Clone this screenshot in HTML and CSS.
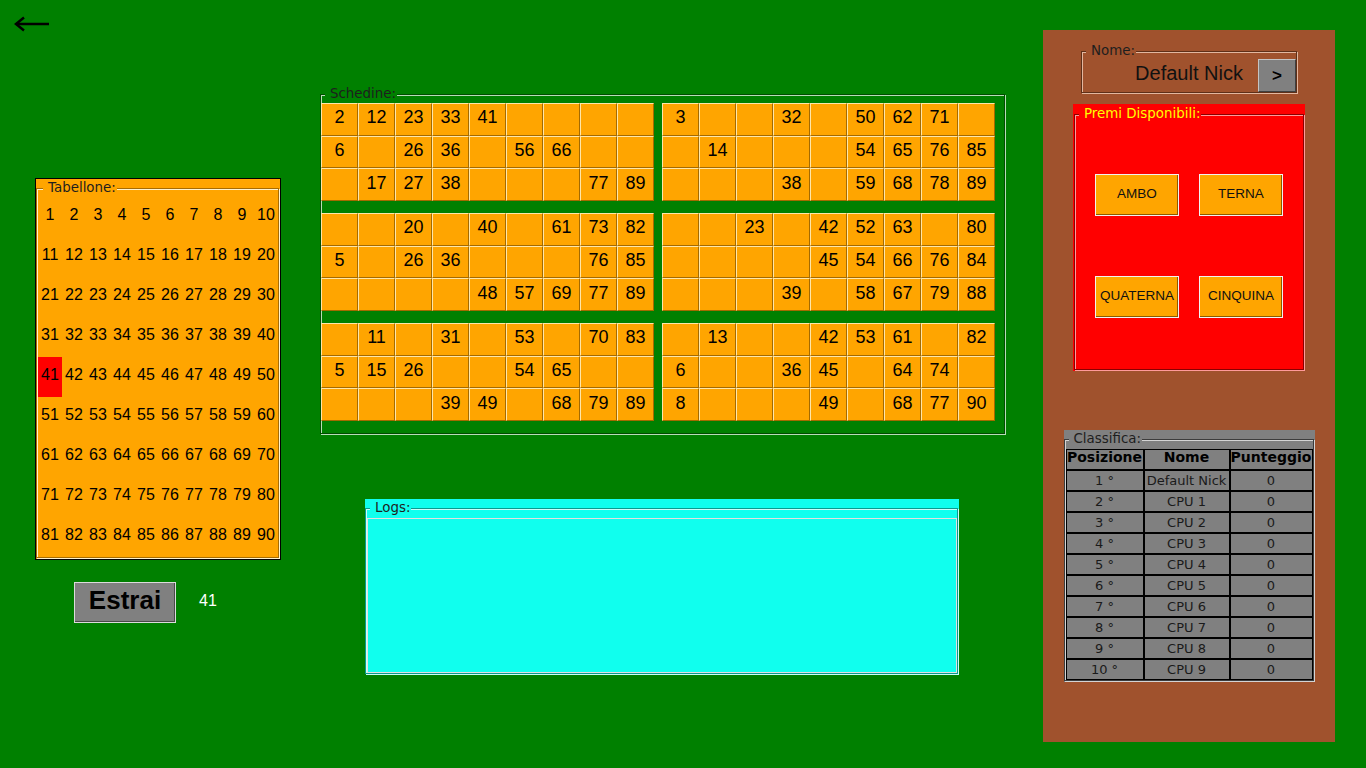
FILE: index.html
```html
<html>
  <head>
    <title>Tombola</title>
    <link rel="stylesheet" href="styles.css">
  </head>
  <body>
    <div class="page">
      <div class="col-left">
        <button class="back" title="Indietro">
          <svg width="36" height="18" viewBox="0 0 36 18">
            <path d="M2.5 10 H35" stroke="#000" stroke-width="2.5" fill="none"/>
            <path d="M10 3.5 L2 10 L10 16.5" stroke="#000" stroke-width="2.5" fill="none" stroke-linejoin="miter"/>
          </svg>
        </button>
        <div class="tabellone">
          <fieldset class="titled">
            <legend>Tabellone:</legend>
            <div class="board" id="board"></div>
          </fieldset>
        </div>
        <div class="draw-row">
          <button class="btn-estrai">Estrai</button>
          <span class="last-drawn">41</span>
        </div>
      </div>

      <div class="col-mid">
        <fieldset class="titled schedine">
          <legend>Schedine:</legend>
          <div class="cards" id="cards"></div>
        </fieldset>
        <div class="logs">
          <fieldset class="titled">
            <legend>Logs:</legend>
            <textarea class="log-area" readonly></textarea>
          </fieldset>
        </div>
      </div>

      <div class="sidebar">
        <fieldset class="titled nome">
          <legend>Nome:</legend>
          <div class="nome-row">
            <span></span>
            <span class="nick">Default Nick</span>
            <button class="btn-go">&gt;</button>
          </div>
        </fieldset>

        <div class="premi">
          <fieldset class="titled">
            <legend>Premi Disponibili:</legend>
            <div class="prizes">
              <button class="btn-prize">AMBO</button>
              <button class="btn-prize">TERNA</button>
              <button class="btn-prize">QUATERNA</button>
              <button class="btn-prize">CINQUINA</button>
            </div>
          </fieldset>
        </div>

        <div class="classifica">
          <fieldset class="titled">
            <legend>Classifica:</legend>
            <table class="ranking">
              <thead>
                <tr><th>Posizione</th><th>Nome</th><th>Punteggio</th></tr>
              </thead>
              <tbody>
                <tr><td>1 °</td><td>Default Nick</td><td>0</td></tr>
                <tr><td>2 °</td><td>CPU 1</td><td>0</td></tr>
                <tr><td>3 °</td><td>CPU 2</td><td>0</td></tr>
                <tr><td>4 °</td><td>CPU 3</td><td>0</td></tr>
                <tr><td>5 °</td><td>CPU 4</td><td>0</td></tr>
                <tr><td>6 °</td><td>CPU 5</td><td>0</td></tr>
                <tr><td>7 °</td><td>CPU 6</td><td>0</td></tr>
                <tr><td>8 °</td><td>CPU 7</td><td>0</td></tr>
                <tr><td>9 °</td><td>CPU 8</td><td>0</td></tr>
                <tr><td>10 °</td><td>CPU 9</td><td>0</td></tr>
              </tbody>
            </table>
          </fieldset>
        </div>
      </div>
    </div>

    <script>
      document.addEventListener("DOMContentLoaded", function () {
        const drawn = [41];

        // tabellone 1..90
        const board = document.getElementById("board");
        for (let n = 1; n <= 90; n++) {
          const cell = document.createElement("span");
          cell.textContent = n;
          if (drawn.includes(n)) cell.className = "drawn";
          board.appendChild(cell);
        }

        // schedine, 0 = casella vuota
        const cards = [
          [[2,12,23,33,41,0,0,0,0],[6,0,26,36,0,56,66,0,0],[0,17,27,38,0,0,0,77,89]],
          [[3,0,0,32,0,50,62,71,0],[0,14,0,0,0,54,65,76,85],[0,0,0,38,0,59,68,78,89]],
          [[0,0,20,0,40,0,61,73,82],[5,0,26,36,0,0,0,76,85],[0,0,0,0,48,57,69,77,89]],
          [[0,0,23,0,42,52,63,0,80],[0,0,0,0,45,54,66,76,84],[0,0,0,39,0,58,67,79,88]],
          [[0,11,0,31,0,53,0,70,83],[5,15,26,0,0,54,65,0,0],[0,0,0,39,49,0,68,79,89]],
          [[0,13,0,0,42,53,61,0,82],[6,0,0,36,45,0,64,74,0],[8,0,0,0,49,0,68,77,90]]
        ];
        const cardsEl = document.getElementById("cards");
        cards.forEach(function (rows) {
          const card = document.createElement("div");
          card.className = "card";
          rows.forEach(function (row) {
            row.forEach(function (n) {
              const cell = document.createElement("span");
              cell.textContent = n ? n : "";
              card.appendChild(cell);
            });
          });
          cardsEl.appendChild(card);
        });
      });
    </script>
  </body>
</html>
```

FILE: styles.css
```css
* {
  box-sizing: border-box;
}

body {
  margin: 0;
  background: #008000;
  font-family: "DejaVu Sans", sans-serif;
  overflow: hidden;
  --panel: #008000;
  --etch-dark: rgba(0, 0, 0, 0.35);
  --etch-light: rgba(255, 255, 255, 0.7);
}

button:hover {
  cursor: pointer;
}

.page {
  display: flex;
  align-items: flex-start;
  width: 1366px;
  height: 768px;
}

/* titled border, swing style */
.titled {
  margin: 0;
  padding: 0;
  min-width: 0;
  border: 1px solid var(--etch-dark);
  box-shadow: inset 1px 1px var(--etch-light), 1px 1px var(--etch-light);
}

.titled > legend {
  margin-left: 4px;
  padding: 0 1px 0 5px;
  font-size: 13.4px;
  line-height: 18px;
  color: #1e1e1e;
  background: var(--panel);
}

/* left column */
.col-left {
  width: 320px;
}

.back {
  display: block;
  margin: 14px 0 0 14px;
  width: 36px;
  height: 18px;
  padding: 0;
  border: 0;
  background: none;
}

.back svg {
  display: block;
}

.tabellone {
  --panel: #ffa500;
  --etch-dark: #a86c00;
  --etch-light: #fff2cc;
  width: 246px;
  margin: 146px 0 0 35px;
  padding-bottom: 1px;
  background: #ffa500;
  border: 1px solid #000;
}

.tabellone .titled {
  width: 243px;
  padding-left: 1px;
}

.tabellone legend {
  margin-left: 5px;
}

.board {
  display: grid;
  grid-template-columns: repeat(10, 24px);
  grid-auto-rows: 40px;
}

.board span {
  display: flex;
  align-items: center;
  justify-content: center;
  padding-bottom: 4px;
  font-family: "Liberation Sans", Arial, sans-serif;
  font-size: 16px;
  color: #000;
}

.board .drawn {
  background: #ff0000;
}

.draw-row {
  display: flex;
  align-items: center;
  margin: 22px 0 0 74px;
}

.btn-estrai {
  width: 102px;
  height: 41px;
  padding: 0 0 5px;
  background: #808080;
  border: 1px solid #dcdcdc;
  box-shadow: inset -1px -1px #4a4a4a;
  font-family: "Liberation Sans", Arial, sans-serif;
  font-size: 26px;
  font-weight: bold;
  color: #000;
}

.last-drawn {
  margin: 0 0 4px 23px;
  font-family: "Liberation Sans", Arial, sans-serif;
  font-size: 16px;
  color: #fff;
}

/* middle column */
.col-mid {
  width: 723px;
}

.schedine {
  --etch-dark: #004d00;
  --etch-light: #b8dcb8;
  width: 685px;
  margin-top: 85px;
  padding: 0 0 12px 0;
}

.cards {
  display: grid;
  grid-template-columns: 333px 333px;
  column-gap: 8px;
  row-gap: 12px;
}

.card {
  display: grid;
  grid-template-columns: repeat(9, 37px);
  grid-template-rows: repeat(3, 1fr);
  height: 98px;
  background: #ffa500;
}

.card span {
  display: flex;
  align-items: center;
  justify-content: center;
  padding-bottom: 3px;
  border-top: 1px solid #ffe6a8;
  border-left: 1px solid #ffe6a8;
  border-right: 1px solid #a46a00;
  border-bottom: 1px solid #a46a00;
  font-family: "Liberation Sans", Arial, sans-serif;
  font-size: 18px;
  color: #000;
}

.logs {
  --panel: #10ffee;
  --etch-dark: #0a9a90;
  --etch-light: #c8fffa;
  width: 594px;
  height: 175px;
  margin: 65px 0 0 45px;
  background: #10ffee;
}

.logs .titled {
  width: 593px;
}

.log-area {
  display: block;
  width: 590px;
  height: 155px;
  margin: 1px 0 0 1px;
  padding: 2px;
  resize: none;
  background: #10ffee;
  border: 1px solid #e4dede;
  outline: none;
}

/* sidebar */
.sidebar {
  --panel: #a0522d;
  --etch-dark: #5e2f18;
  --etch-light: #e3b79f;
  display: flex;
  flex-direction: column;
  align-items: center;
  width: 292px;
  height: 712px;
  margin-top: 30px;
  padding-top: 12px;
  background: #a0522d;
}

.nome {
  width: 216px;
}

.nome-row {
  display: grid;
  grid-template-columns: 38px 1fr 38px;
  align-items: center;
  height: 32px;
}

.nick {
  padding-bottom: 6px;
  text-align: center;
  font-family: "Liberation Sans", Arial, sans-serif;
  font-size: 20px;
  color: #111;
}

.btn-go {
  width: 38px;
  height: 33px;
  margin-top: -1px;
  padding: 0;
  background: #808080;
  border: 1px solid;
  border-color: #c4c4c4 #404040 #404040 #c4c4c4;
  font-family: "Liberation Sans", Arial, sans-serif;
  font-size: 17px;
  font-weight: bold;
  color: #000;
}

.premi {
  --panel: #ff0000;
  --etch-dark: #8a0000;
  --etch-light: #ff9a9a;
  width: 232px;
  height: 267px;
  margin-top: 11px;
  padding: 1px;
  background: #ff0000;
}

.premi .titled {
  height: 265px;
}

.premi legend {
  color: #ffff00;
}

.prizes {
  display: grid;
  grid-template-columns: 84px 84px;
  grid-template-rows: 42px 42px;
  gap: 60px 20px;
  justify-content: center;
  padding-top: 51px;
}

.btn-prize {
  padding: 0 0 4px;
  background: #ffa500;
  border: 1px solid #f2f2f2;
  box-shadow: inset -1px -1px #8c5a00;
  font-family: "Liberation Sans", Arial, sans-serif;
  font-size: 13.5px;
  color: #111;
}

.classifica {
  --panel: #808080;
  --etch-dark: #3c3c3c;
  --etch-light: #d4d4d4;
  width: 251px;
  height: 252px;
  margin-top: 59px;
  background: #808080;
}

.classifica .titled {
  width: 250px;
}

.ranking {
  width: 247px;
  margin: 1px 0 0 1px;
  border-collapse: separate;
  border-spacing: 0;
  table-layout: fixed;
}

.ranking th,
.ranking td {
  height: 21px;
  padding: 0 0 1px;
  border: 1px solid #000;
  text-align: center;
  white-space: nowrap;
  overflow: hidden;
}

.ranking th {
  padding-bottom: 4px;
  font-size: 14px;
  line-height: 15px;
  font-weight: bold;
  color: #000;
}

.ranking th:nth-child(1) {
  width: 78px;
}

.ranking th:nth-child(2) {
  width: 86px;
}

.ranking td {
  font-size: 13px;
  line-height: 15px;
  color: #1a1a1a;
}
```
